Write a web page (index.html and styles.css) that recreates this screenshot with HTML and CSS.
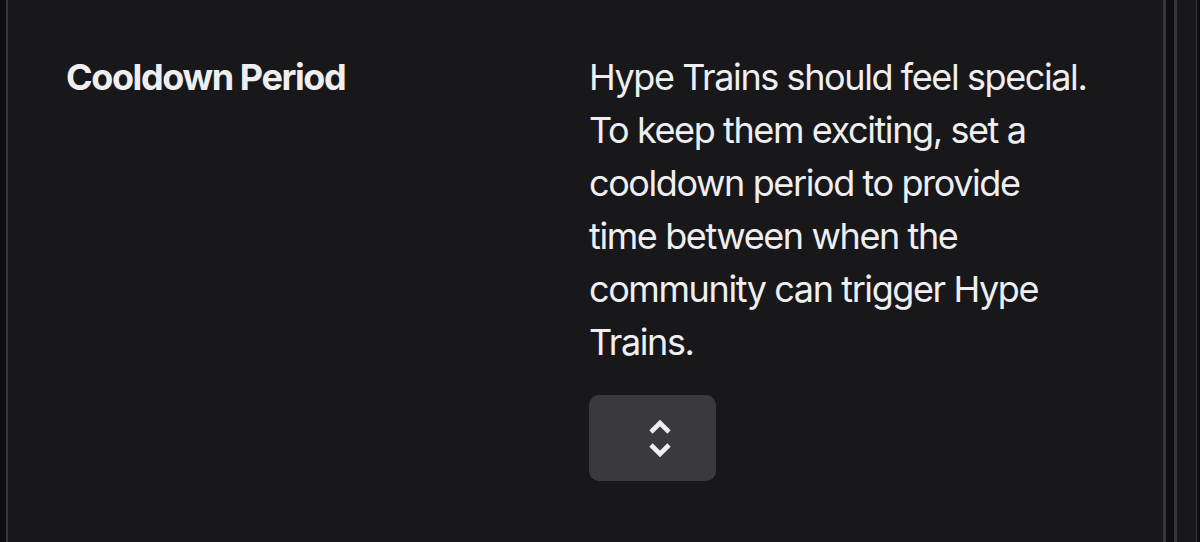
FILE: index.html
```html
<!DOCTYPE html>
<html lang="en">
<head>
  <meta charset="UTF-8">
  <title>Hype Train Settings</title>
  <meta name="viewport" content="width=device-width, initial-scale=1.0">
  <link rel="stylesheet" href="styles.css">
</head>
<body>

  <div class="frame">
    <div class="gutter"></div>

    <section class="settings-panel">
      <div class="setting-row">
        <h3 class="setting-label">Cooldown Period</h3>
        <div class="setting-body">
          <p class="setting-desc">Hype Trains should feel special. To keep them exciting, set a cooldown period to provide time between when the community can trigger Hype Trains.</p>
          <button class="select-btn" type="button" aria-label="Choose cooldown">
            <svg width="24" height="40" viewBox="0 0 24 40">
              <path d="M3 14 L12 5 L21 14" fill="none" stroke="#efeff1" stroke-width="4.6"/>
              <path d="M3 27 L12 36 L21 27" fill="none" stroke="#efeff1" stroke-width="4.6"/>
            </svg>
          </button>
        </div>
      </div>
    </section>

    <div class="scroll-track">
      <div class="scroll-gap"></div>
      <div class="scroll-rail"></div>
    </div>
  </div>

</body>
</html>
```

FILE: styles.css
```css
:root {
  --page-bg: #0e0e10;
  --panel-bg: #18181b;
  --edge: #35353b;
  --text: #efeff1;
  --btn-bg: #3a3a3d;
}

body {
  margin: 0;
  background: var(--page-bg);
  font-family: Inter, "Noto Sans", Arial, sans-serif;
  color: var(--text);
}

.frame {
  display: flex;
  height: 542px;
  overflow: hidden;
}

.gutter {
  width: 6px;
  background: var(--page-bg);
  border-right: 2px solid var(--edge);
}

.settings-panel {
  width: 1155px;
  background: var(--panel-bg);
  border-right: 3px solid var(--edge);
}

.setting-row {
  display: grid;
  grid-template-columns: 523px 505px;
  padding: 51px 0 0 58px;
}

.setting-label {
  margin: 0;
  font-size: 36px;
  font-weight: 700;
  letter-spacing: -1.4px;
  line-height: 53px;
}

.setting-body {
  display: flex;
  flex-direction: column;
  align-items: flex-start;
}

.setting-desc {
  margin: 0;
  font-size: 36px;
  line-height: 53px;
  font-weight: 400;
  letter-spacing: -1.4px;
}

.select-btn {
  margin-top: 26px;
  width: 127px;
  height: 86px;
  border: none;
  border-radius: 10px;
  background: var(--btn-bg);
  display: flex;
  align-items: center;
  justify-content: center;
  padding: 0 0 0 15px;
  cursor: pointer;
}

.scroll-track {
  flex: 1;
  display: flex;
}

.scroll-gap {
  width: 8px;
  background: #0f0f11;
  border-right: 3px solid var(--edge);
}

.scroll-rail {
  width: 19px;
  background: var(--panel-bg);
  border-right: 1px solid var(--edge);
}
```
